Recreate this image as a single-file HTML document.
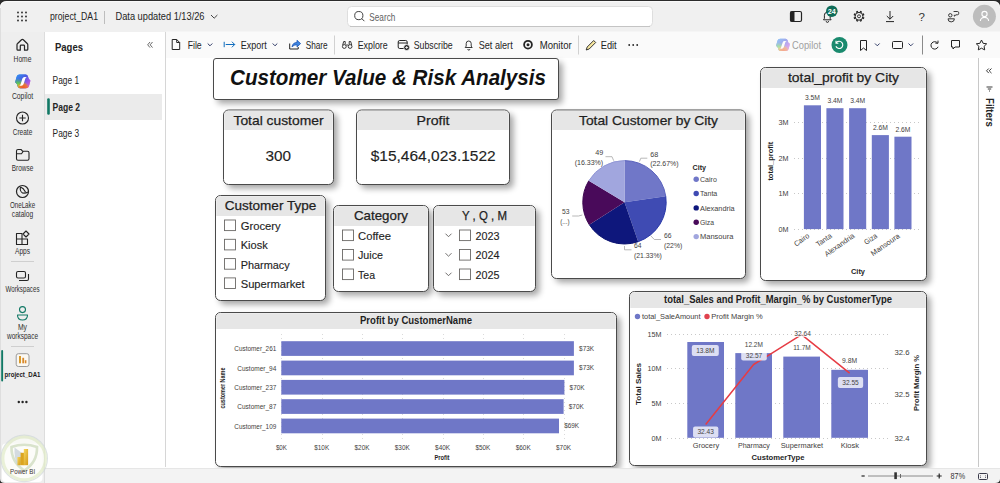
<!DOCTYPE html>
<html lang="en"><head><meta charset="utf-8"><title>project_DA1 - Power BI</title>
<style>
html,body{margin:0;padding:0;background:#ffffff;overflow:hidden}
svg{display:block}
text{font-family:"Liberation Sans",sans-serif;}
</style></head><body>
<svg width="1000" height="483" viewBox="0 0 1000 483">
<rect x="0" y="0" width="1000" height="483" fill="#ffffff" />
<rect x="0" y="0" width="1000" height="32" fill="#f0f0f0" />
<rect x="0" y="32" width="45" height="451" fill="#eeeeee" />
<rect x="45" y="32" width="121" height="435" fill="#ffffff" />
<line x1="165.5" y1="32" x2="165.5" y2="467" stroke="#d6d6d6" stroke-width="1" />
<rect x="166" y="31.5" width="834" height="26.5" fill="#fafafa" />
<line x1="978.5" y1="58" x2="978.5" y2="467" stroke="#c8c8c8" stroke-width="1" />
<path d="M0 7.5 V0 H1000 V7.5 Q1000 1 993.5 1 H6.5 Q0 1 0 7.5 Z" fill="#2b2b2b" stroke="none" stroke-width="1" />
<path d="M0.5 8 Q0.5 1.6 7 1.6 H993 Q999.5 1.6 999.5 8" fill="none" stroke="#fbfbfb" stroke-width="0.8" />
<line x1="0.5" y1="8" x2="0.5" y2="483" stroke="#dedede" stroke-width="1" />
<line x1="44.5" y1="32" x2="44.5" y2="483" stroke="#dddddd" stroke-width="1" />
<circle cx="18" cy="12.5" r="0.9" fill="#242424" />
<circle cx="18" cy="16.5" r="0.9" fill="#242424" />
<circle cx="18" cy="20.5" r="0.9" fill="#242424" />
<circle cx="22" cy="12.5" r="0.9" fill="#242424" />
<circle cx="22" cy="16.5" r="0.9" fill="#242424" />
<circle cx="22" cy="20.5" r="0.9" fill="#242424" />
<circle cx="26" cy="12.5" r="0.9" fill="#242424" />
<circle cx="26" cy="16.5" r="0.9" fill="#242424" />
<circle cx="26" cy="20.5" r="0.9" fill="#242424" />
<text x="50" y="20.4" font-size="11.5" fill="#242424" textLength="48" lengthAdjust="spacingAndGlyphs" >project_DA1</text>
<line x1="104.5" y1="11" x2="104.5" y2="24" stroke="#bdbdbd" stroke-width="1" />
<text x="115.5" y="20.4" font-size="11.5" fill="#242424" textLength="89" lengthAdjust="spacingAndGlyphs" >Data updated 1/13/26</text>
<path d="M211 15 l3.2 3.2 l3.2 -3.2" fill="none" stroke="#424242" stroke-width="1" />
<rect x="347.5" y="6.5" width="305" height="20" fill="#ffffff" rx="4" stroke="#dedede" stroke-width="1" />
<line x1="350" y1="26.5" x2="650" y2="26.5" stroke="#c4c4c4" stroke-width="1" />
<circle cx="358.8" cy="15.6" r="4.1" fill="none" stroke="#424242" stroke-width="1" />
<line x1="361.8" y1="18.6" x2="364.4" y2="21.2" stroke="#424242" stroke-width="1" />
<text x="369.3" y="20.6" font-size="11" fill="#616161" textLength="26" lengthAdjust="spacingAndGlyphs" >Search</text>
<rect x="790.5" y="11.5" width="11" height="10" fill="none" rx="1.5" stroke="#242424" stroke-width="1.2" />
<rect x="790.5" y="11.5" width="4" height="10" fill="#242424" />
<path d="M823.5 19.8 h7.6 l-0.9 -1.4 v-3.2 a2.9 2.9 0 0 0 -5.8 0 v3.2 z M826.2 21.2 a1.2 1.2 0 0 0 2.4 0" fill="none" stroke="#242424" stroke-width="1" />
<circle cx="831.8" cy="11.2" r="5.8" fill="#0f6c57" />
<text x="831.8" y="13.8" font-size="7" fill="#ffffff" text-anchor="middle" font-weight="bold" textLength="8" lengthAdjust="spacingAndGlyphs" >24</text>
<circle cx="859" cy="16.3" r="3.9" fill="none" stroke="#242424" stroke-width="1" />
<circle cx="859" cy="16.3" r="1.5" fill="none" stroke="#242424" stroke-width="0.9" />
<line x1="862.7879060832963" y1="17.86900207269687" x2="864.081337428812" y2="18.404758878007996" stroke="#242424" stroke-width="2" />
<line x1="860.5690020726969" y1="20.087906083296275" x2="861.1047588780079" y2="21.381337428812078" stroke="#242424" stroke-width="2" />
<line x1="857.4309979273031" y1="20.087906083296275" x2="856.8952411219921" y2="21.381337428812078" stroke="#242424" stroke-width="2" />
<line x1="855.2120939167037" y1="17.86900207269687" x2="853.918662571188" y2="18.404758878007996" stroke="#242424" stroke-width="2" />
<line x1="855.2120939167037" y1="14.730997927303132" x2="853.918662571188" y2="14.195241121992007" stroke="#242424" stroke-width="2" />
<line x1="857.4309979273031" y1="12.512093916703726" x2="856.8952411219921" y2="11.218662571187924" stroke="#242424" stroke-width="2" />
<line x1="860.5690020726969" y1="12.512093916703726" x2="861.1047588780079" y2="11.218662571187924" stroke="#242424" stroke-width="2" />
<line x1="862.7879060832963" y1="14.73099792730313" x2="864.081337428812" y2="14.195241121992003" stroke="#242424" stroke-width="2" />
<path d="M890 11 v8.2 M886.8 16 l3.2 3.2 l3.2 -3.2 M886 21.6 h8" fill="none" stroke="#242424" stroke-width="1" />
<text x="921.6" y="20.7" font-size="11.5" fill="#333333" text-anchor="middle" >?</text>
<circle cx="950.3" cy="15.3" r="1.7" fill="none" stroke="#242424" stroke-width="0.9" />
<path d="M953.6 11.5 h3.8 q1.3 0 1.3 1.2 v0.9 q0 1.2 -1.3 1.2 h-1.4 l-1.7 1.4 v-1.4 M948 18.8 h6.4 q0 3.1 -3.2 3.1 q-3.2 0 -3.2 -3.1 z" fill="none" stroke="#242424" stroke-width="0.9" />
<circle cx="984.4" cy="16.3" r="11.5" fill="#bdbdbd" />
<circle cx="984.5" cy="14" r="2.6" fill="none" stroke="#ffffff" stroke-width="1.1" />
<path d="M980.4 21 a4.1 3.6 0 0 1 8.2 0" fill="none" stroke="#ffffff" stroke-width="1.1" />
<path d="M17 44.8 q0 -0.8 0.6 -1.3 l3.9 -3.7 q0.9 -0.8 1.8 0 l3.9 3.7 q0.6 0.5 0.6 1.3 v4.4 q0 1 -1 1 h-2.3 v-4.2 q0 -0.8 -0.8 -0.8 h-2.6 q-0.8 0 -0.8 0.8 v4.2 h-2.3 q-1 0 -1 -1 z" fill="none" stroke="#242424" stroke-width="1.2" stroke-linejoin="round"/>
<text x="22.5" y="61.6" font-size="8.2" fill="#2e2e2e" text-anchor="middle" textLength="17.8" lengthAdjust="spacingAndGlyphs" >Home</text>
<defs><linearGradient id="cgA" x1="0" y1="0" x2="1" y2="0.9"><stop offset="0" stop-color="#2b9af3"/><stop offset="0.45" stop-color="#4a5be0"/><stop offset="0.75" stop-color="#a455e6"/><stop offset="1" stop-color="#ee62b8"/></linearGradient><radialGradient id="cgB" cx="0.18" cy="0.9" r="0.62"><stop offset="0" stop-color="#d9dc2a"/><stop offset="0.45" stop-color="#59c65a"/><stop offset="1" stop-color="#59c65a" stop-opacity="0"/></radialGradient><radialGradient id="cgC" cx="0.52" cy="0.95" r="0.42"><stop offset="0" stop-color="#f5552a"/><stop offset="0.6" stop-color="#f5752a" stop-opacity="0.85"/><stop offset="1" stop-color="#f58a3a" stop-opacity="0"/></radialGradient><g id="cop"><path id="copS" d="M4.6 0.1 h6 q1.8 0 2.3 1.7 l0.6 2 q0.4 1.3 1.2 1.5 q0.9 0.3 0.5 1.8 l-1.2 4.5 q-0.6 2.3 -3 2.3 h-6 q-1.8 0 -2.3 -1.7 l-0.6 -2 q-0.4 -1.3 -1.2 -1.5 q-0.9 -0.3 -0.5 -1.8 l1.2 -4.5 q0.6 -2.3 3 -2.3 z" fill="url(#cgA)"/><use href="#copS" fill="url(#cgB)"/><path d="M4.6 0.1 h6 q1.8 0 2.3 1.7 l0.6 2 q0.4 1.3 1.2 1.5 q0.9 0.3 0.5 1.8 l-1.2 4.5 q-0.6 2.3 -3 2.3 h-6 q-1.8 0 -2.3 -1.7 l-0.6 -2 q-0.4 -1.3 -1.2 -1.5 q-0.9 -0.3 -0.5 -1.8 l1.2 -4.5 q0.6 -2.3 3 -2.3 z" fill="url(#cgB)"/><path d="M4.6 0.1 h6 q1.8 0 2.3 1.7 l0.6 2 q0.4 1.3 1.2 1.5 q0.9 0.3 0.5 1.8 l-1.2 4.5 q-0.6 2.3 -3 2.3 h-6 q-1.8 0 -2.3 -1.7 l-0.6 -2 q-0.4 -1.3 -1.2 -1.5 q-0.9 -0.3 -0.5 -1.8 l1.2 -4.5 q0.6 -2.3 3 -2.3 z" fill="url(#cgC)"/><path d="M7.4 4.2 q0.5 -1.6 2.2 -1.6 h2.4 q-1.2 0.2 -1.7 1.8 l-1.7 5.3 q-0.5 1.6 -2.2 1.6 h-2.4 q1.2 -0.2 1.7 -1.8 z" fill="#ffffff"/></g></defs>
<use href="#cop" transform="translate(15,74.4)"/>
<text x="22.5" y="98.6" font-size="8.2" fill="#2e2e2e" text-anchor="middle" textLength="21.2" lengthAdjust="spacingAndGlyphs" >Copilot</text>
<circle cx="22.5" cy="118" r="6" fill="none" stroke="#242424" stroke-width="1.1" />
<path d="M22.5 114.8 v6.4 M19.3 118 h6.4" fill="none" stroke="#242424" stroke-width="1.1" />
<text x="22.5" y="135" font-size="8.2" fill="#2e2e2e" text-anchor="middle" textLength="19.5" lengthAdjust="spacingAndGlyphs" >Create</text>
<path d="M16.5 151 q0 -1.5 1.5 -1.5 h3 l1.8 1.8 h4.7 q1.5 0 1.5 1.5 v6 q0 1.5 -1.5 1.5 h-9.5 q-1.5 0 -1.5 -1.5 z M16.5 153.8 h5 l1.8 -2.5" fill="none" stroke="#242424" stroke-width="1.1" stroke-linejoin="round"/>
<text x="22.5" y="171" font-size="8.2" fill="#2e2e2e" text-anchor="middle" textLength="21.5" lengthAdjust="spacingAndGlyphs" >Browse</text>
<circle cx="22.5" cy="191.5" r="6" fill="none" stroke="#242424" stroke-width="1.2" />
<path d="M20.5 187 q-1 4 2 6 q3 0.5 5.5 -1 M20.5 187 q3 1 5 5" fill="none" stroke="#242424" stroke-width="1.1" />
<text x="22.5" y="208" font-size="8.2" fill="#2e2e2e" text-anchor="middle" textLength="25.2" lengthAdjust="spacingAndGlyphs" >OneLake</text>
<text x="22.5" y="217" font-size="8.2" fill="#2e2e2e" text-anchor="middle" textLength="21.3" lengthAdjust="spacingAndGlyphs" >catalog</text>
<path d="M16.5 233.5 h5.5 v5.5 h-5.5 z M16.5 239 h5.5 v5.5 h-5.5 z M22 239 h5.5 v5.5 h-5.5 z" fill="none" stroke="#242424" stroke-width="1.1" stroke-linejoin="round"/>
<path d="M26 231 l3 3 l-3 3 l-3 -3 z" fill="none" stroke="#242424" stroke-width="1.1" stroke-linejoin="round"/>
<text x="22.5" y="254" font-size="8.2" fill="#2e2e2e" text-anchor="middle" textLength="15" lengthAdjust="spacingAndGlyphs" >Apps</text>
<line x1="11" y1="261.5" x2="34" y2="261.5" stroke="#cfcfcf" stroke-width="1" />
<rect x="16.5" y="271.5" width="9" height="6.5" fill="none" rx="1.5" stroke="#242424" stroke-width="1.1" />
<path d="M19 280.5 h8 q1.5 0 1.5 -1.5 v-5" fill="none" stroke="#242424" stroke-width="1.1" />
<text x="22.5" y="292" font-size="8.2" fill="#2e2e2e" text-anchor="middle" textLength="34" lengthAdjust="spacingAndGlyphs" >Workspaces</text>
<circle cx="22.5" cy="309.6" r="3" fill="none" stroke="#117865" stroke-width="1.1" />
<path d="M17.5 315 h10 q0 5 -5 5 q-5 0 -5 -5 z" fill="none" stroke="#117865" stroke-width="1.1" stroke-linejoin="round"/>
<text x="22.5" y="329.5" font-size="8.2" fill="#2e2e2e" text-anchor="middle" textLength="9" lengthAdjust="spacingAndGlyphs" >My</text>
<text x="22.5" y="338.5" font-size="8.2" fill="#2e2e2e" text-anchor="middle" textLength="31" lengthAdjust="spacingAndGlyphs" >workspace</text>
<line x1="11" y1="346.5" x2="34" y2="346.5" stroke="#cfcfcf" stroke-width="1" />
<rect x="1.2" y="350" width="1.9" height="31.5" fill="#117865" rx="0.9" />
<rect x="16.2" y="353.7" width="12.8" height="12.8" fill="#fbf8f2" rx="2.2" stroke="#9a9a9a" stroke-width="1" />
<rect x="19" y="356" width="2" height="7.3" fill="#d99a2b" />
<rect x="22.3" y="357.8" width="1.8" height="5.5" fill="#d9892b" />
<rect x="24.8" y="360.2" width="1.6" height="3.1" fill="#d9892b" />
<text x="22.5" y="376.8" font-size="8" fill="#1a1a1a" text-anchor="middle" font-weight="bold" textLength="35.8" lengthAdjust="spacingAndGlyphs" >project_DA1</text>
<circle cx="18.8" cy="402" r="1.2" fill="#242424" />
<circle cx="22.6" cy="402" r="1.2" fill="#242424" />
<circle cx="26.4" cy="402" r="1.2" fill="#242424" />
<text x="55" y="51" font-size="11.5" fill="#242424" font-weight="bold" textLength="28" lengthAdjust="spacingAndGlyphs" >Pages</text>
<path d="M150 42 l-2.3 2.8 l2.3 2.8 M152.5 42 l-2.3 2.8 l2.3 2.8" fill="none" stroke="#424242" stroke-width="0.8" />
<text x="52.6" y="84" font-size="10.5" fill="#242424" textLength="26.5" lengthAdjust="spacingAndGlyphs" >Page 1</text>
<rect x="45" y="94" width="117" height="26" fill="#ebebeb" />
<rect x="47.2" y="98.2" width="2.6" height="16.6" fill="#117865" rx="1.2" />
<text x="52.6" y="110.6" font-size="10.5" fill="#242424" font-weight="bold" textLength="27.5" lengthAdjust="spacingAndGlyphs" >Page 2</text>
<text x="52.6" y="137" font-size="10.5" fill="#242424" textLength="26.5" lengthAdjust="spacingAndGlyphs" >Page 3</text>
<g transform="translate(0.7,0)">
<path d="M171.5 39.5 h4.5 l3 3 v7 h-7.5 z M176 39.5 v3 h3" fill="none" stroke="#242424" stroke-width="1" stroke-linejoin="round"/>
<text x="187" y="48.5" font-size="10.5" fill="#242424" textLength="14" lengthAdjust="spacingAndGlyphs" >File</text>
<path d="M207 43.5 l2.3 2.3 l2.3 -2.3" fill="none" stroke="#2f3a66" stroke-width="1" />
<path d="M223.5 41.8 v5.4 M225 44.5 h9 M231.2 41.7 l2.8 2.8 l-2.8 2.8" fill="none" stroke="#0f6cbd" stroke-width="1" />
<text x="240" y="48.5" font-size="10.5" fill="#242424" textLength="26" lengthAdjust="spacingAndGlyphs" >Export</text>
<path d="M272 43.5 l2.3 2.3 l2.3 -2.3" fill="none" stroke="#2f3a66" stroke-width="1" />
<path d="M289 43.5 v5.5 h8.5 v-2" fill="none" stroke="#242424" stroke-width="1" />
<path d="M291.3 46.8 q0.8 -4.3 5 -4.3 v-2.2 l3.6 3.3 l-3.6 3.3 v-2.2 q-3 0 -5 2.1 z" fill="#3f86e0" stroke="#1d55b5" stroke-width="0.8" stroke-linejoin="round"/>
<text x="305" y="48.5" font-size="10.5" fill="#242424" textLength="22" lengthAdjust="spacingAndGlyphs" >Share</text>
<line x1="333.8" y1="35.5" x2="333.8" y2="54.5" stroke="#d1d1d1" stroke-width="1" />
<circle cx="343.6" cy="46.5" r="1.9" fill="none" stroke="#242424" stroke-width="0.9" />
<circle cx="349.4" cy="46.5" r="1.9" fill="none" stroke="#242424" stroke-width="0.9" />
<path d="M342 45 l1 -3.5 h1.5 v3 M351 45 l-1 -3.5 h-1.5 v3 M345.4 45 h2.2" fill="none" stroke="#242424" stroke-width="0.9" />
<text x="357" y="48.5" font-size="10.5" fill="#242424" textLength="30" lengthAdjust="spacingAndGlyphs" >Explore</text>
<rect x="397.5" y="40.5" width="9" height="8" fill="none" rx="1.5" stroke="#242424" stroke-width="1" />
<line x1="397.5" y1="43" x2="406.5" y2="43" stroke="#242424" stroke-width="1" />
<circle cx="406" cy="47.5" r="3" fill="#242424" stroke="#fafafa" stroke-width="0.8" />
<path d="M406 46 v3 M404.5 47.5 h3" fill="none" stroke="#ffffff" stroke-width="0.8" />
<text x="413" y="48.5" font-size="10.5" fill="#242424" textLength="39" lengthAdjust="spacingAndGlyphs" >Subscribe</text>
<path d="M464.5 47.5 h7 l-1 -1.4 v-2.6 a2.5 2.5 0 0 0 -5 0 v2.6 z M467 49 a1.1 1.1 0 0 0 2.2 0" fill="none" stroke="#242424" stroke-width="0.9" />
<text x="478" y="48.5" font-size="10.5" fill="#242424" textLength="34" lengthAdjust="spacingAndGlyphs" >Set alert</text>
<circle cx="527.3" cy="44.7" r="3.9" fill="none" stroke="#242424" stroke-width="1.8" />
<circle cx="527.3" cy="44.7" r="1.5" fill="#242424" />
<text x="539" y="48.5" font-size="10.5" fill="#242424" textLength="32" lengthAdjust="spacingAndGlyphs" >Monitor</text>
<line x1="577.8" y1="35.5" x2="577.8" y2="54.5" stroke="#d1d1d1" stroke-width="1" />
<path d="M585.5 50 l1 -3 l6.5 -6.5 l2 2 l-6.5 6.5 z" fill="#f7e7a0" stroke="#242424" stroke-width="0.9" stroke-linejoin="round"/>
<text x="600" y="48.5" font-size="10.5" fill="#242424" textLength="16" lengthAdjust="spacingAndGlyphs" >Edit</text>
<circle cx="628.5" cy="45" r="0.9" fill="#242424" />
<circle cx="632.5" cy="45" r="0.9" fill="#242424" />
<circle cx="636.5" cy="45" r="0.9" fill="#242424" />
</g>
<use href="#cop" transform="translate(776,38.6) scale(0.9)" opacity="0.5"/>
<text x="792" y="48.5" font-size="10.5" fill="#a0a0a0" textLength="29" lengthAdjust="spacingAndGlyphs" >Copilot</text>
<circle cx="839.5" cy="45" r="8" fill="#1a8a6e" />
<path d="M836.5 42.5 a3.6 3.6 0 1 1 -0.6 3.8 M836 40.8 v2.4 h2.4" fill="none" stroke="#ffffff" stroke-width="1.1" />
<path d="M860.5 40.5 h6 v10 l-3 -2.5 l-3 2.5 z" fill="none" stroke="#242424" stroke-width="1" stroke-linejoin="round"/>
<path d="M875 43.5 l2.3 2.3 l2.3 -2.3" fill="none" stroke="#2f3a66" stroke-width="1" />
<rect x="892.5" y="41.5" width="10" height="7" fill="none" rx="1" stroke="#242424" stroke-width="1" />
<path d="M908.5 43.5 l2.3 2.3 l2.3 -2.3" fill="none" stroke="#2f3a66" stroke-width="1" />
<line x1="922.5" y1="35.5" x2="922.5" y2="54.5" stroke="#8a8a8a" stroke-width="1" />
<path d="M937.5 43 a3.7 3.7 0 1 0 0.6 3.8 M938 40.6 v2.6 h-2.6" fill="none" stroke="#242424" stroke-width="1" />
<path d="M951.5 40.5 h8 v6.5 h-4.5 l-2 2 v-2 h-1.5 z" fill="none" stroke="#242424" stroke-width="1" stroke-linejoin="round"/>
<path d="M981.5 40 l1.6 3.3 l3.6 0.5 l-2.6 2.5 l0.6 3.6 l-3.2 -1.7 l-3.2 1.7 l0.6 -3.6 l-2.6 -2.5 l3.6 -0.5 z" fill="none" stroke="#242424" stroke-width="1" stroke-linejoin="round"/>
<path d="M991.5 68.5 l-2.3 2.3 l2.3 2.3 M988.8 68.5 l-2.3 2.3 l2.3 2.3" fill="none" stroke="#242424" stroke-width="0.9" />
<path d="M986.5 87 h6 M987.8 89 h3.4 M989 91 h1" fill="none" stroke="#242424" stroke-width="0.9" />
<text x="986" y="98" font-size="10.5" fill="#242424" font-weight="bold" textLength="29" lengthAdjust="spacingAndGlyphs" transform="rotate(90 986 98)" >Filters</text>
<defs><filter id="sh" x="-10%" y="-20%" width="130%" height="160%"><feGaussianBlur in="SourceAlpha" stdDeviation="3"/><feOffset dx="4" dy="4"/><feComponentTransfer><feFuncA type="linear" slope="0.36"/></feComponentTransfer></filter></defs>
<rect x="213.5" y="58.5" width="345" height="41" fill="#000" rx="2.5" filter="url(#sh)"/>
<rect x="213.5" y="58.5" width="345" height="41" fill="#ffffff" rx="2.5" stroke="#4a4a4a" stroke-width="1" />
<text x="230" y="85" font-size="21.5" fill="#111111" font-weight="bold" font-style="italic" textLength="316" lengthAdjust="spacingAndGlyphs" >Customer Value &amp; Risk Analysis</text>
<rect x="223.5" y="110.0" width="110" height="74.5" fill="#000" rx="5" filter="url(#sh)"/>
<rect x="223.5" y="110.0" width="110" height="74.5" fill="#ffffff" rx="5" stroke="#4a4a4a" stroke-width="1" />
<path d="M224.3 130.0 V114.8 Q224.3 110.8 228.3 110.8 H328.7 Q332.7 110.8 332.7 114.8 V130.0 Z" fill="#e6e6e6"/>
<text x="278.5" y="125" font-size="13" fill="#1f1f1f" text-anchor="middle" textLength="90" lengthAdjust="spacingAndGlyphs" stroke="#1f1f1f" stroke-width="0.25">Total customer</text>
<text x="278.3" y="161.2" font-size="15.4" fill="#1f1f1f" text-anchor="middle" textLength="25.5" lengthAdjust="spacingAndGlyphs" stroke="#1f1f1f" stroke-width="0.15">300</text>
<rect x="356.5" y="110.0" width="153" height="74.5" fill="#000" rx="5" filter="url(#sh)"/>
<rect x="356.5" y="110.0" width="153" height="74.5" fill="#ffffff" rx="5" stroke="#4a4a4a" stroke-width="1" />
<path d="M357.3 130.0 V114.8 Q357.3 110.8 361.3 110.8 H504.7 Q508.7 110.8 508.7 114.8 V130.0 Z" fill="#e6e6e6"/>
<text x="433.0" y="125" font-size="13" fill="#1f1f1f" text-anchor="middle" textLength="33" lengthAdjust="spacingAndGlyphs" stroke="#1f1f1f" stroke-width="0.25">Profit</text>
<text x="433.2" y="161.2" font-size="15.4" fill="#1f1f1f" text-anchor="middle" textLength="125" lengthAdjust="spacingAndGlyphs" stroke="#1f1f1f" stroke-width="0.15">$15,464,023.1522</text>
<rect x="215.5" y="195.5" width="110" height="105" fill="#000" rx="5" filter="url(#sh)"/>
<rect x="215.5" y="195.5" width="110" height="105" fill="#ffffff" rx="5" stroke="#4a4a4a" stroke-width="1" />
<path d="M216.3 216 V200.3 Q216.3 196.3 220.3 196.3 H320.7 Q324.7 196.3 324.7 200.3 V216 Z" fill="#e6e6e6"/>
<text x="270.5" y="210" font-size="13" fill="#1f1f1f" text-anchor="middle" textLength="91.5" lengthAdjust="spacingAndGlyphs" stroke="#1f1f1f" stroke-width="0.25">Customer Type</text>
<rect x="224.5" y="220.0" width="11" height="10.6" fill="#ffffff" stroke="#6a6866" stroke-width="0.9" />
<text x="240.7" y="230.0" font-size="11.5" fill="#1f1f1f" textLength="40" lengthAdjust="spacingAndGlyphs" stroke="#1f1f1f" stroke-width="0.15">Grocery</text>
<rect x="224.5" y="239.3" width="11" height="10.6" fill="#ffffff" stroke="#6a6866" stroke-width="0.9" />
<text x="240.7" y="249.3" font-size="11.5" fill="#1f1f1f" textLength="27" lengthAdjust="spacingAndGlyphs" stroke="#1f1f1f" stroke-width="0.15">Kiosk</text>
<rect x="224.5" y="258.6" width="11" height="10.6" fill="#ffffff" stroke="#6a6866" stroke-width="0.9" />
<text x="240.7" y="268.6" font-size="11.5" fill="#1f1f1f" textLength="49" lengthAdjust="spacingAndGlyphs" stroke="#1f1f1f" stroke-width="0.15">Pharmacy</text>
<rect x="224.5" y="277.9" width="11" height="10.6" fill="#ffffff" stroke="#6a6866" stroke-width="0.9" />
<text x="240.7" y="287.9" font-size="11.5" fill="#1f1f1f" textLength="64" lengthAdjust="spacingAndGlyphs" stroke="#1f1f1f" stroke-width="0.15">Supermarket</text>
<rect x="333.5" y="205.5" width="95" height="86" fill="#000" rx="5" filter="url(#sh)"/>
<rect x="333.5" y="205.5" width="95" height="86" fill="#ffffff" rx="5" stroke="#4a4a4a" stroke-width="1" />
<path d="M334.3 226 V210.3 Q334.3 206.3 338.3 206.3 H423.7 Q427.7 206.3 427.7 210.3 V226 Z" fill="#e6e6e6"/>
<text x="381.0" y="220" font-size="13" fill="#1f1f1f" text-anchor="middle" textLength="54" lengthAdjust="spacingAndGlyphs" stroke="#1f1f1f" stroke-width="0.25">Category</text>
<rect x="342.5" y="230.0" width="11" height="10.6" fill="#ffffff" stroke="#6a6866" stroke-width="0.9" />
<text x="358" y="239.5" font-size="11.5" fill="#1f1f1f" textLength="33" lengthAdjust="spacingAndGlyphs" stroke="#1f1f1f" stroke-width="0.15">Coffee</text>
<rect x="342.5" y="249.5" width="11" height="10.6" fill="#ffffff" stroke="#6a6866" stroke-width="0.9" />
<text x="358" y="259.0" font-size="11.5" fill="#1f1f1f" textLength="25" lengthAdjust="spacingAndGlyphs" stroke="#1f1f1f" stroke-width="0.15">Juice</text>
<rect x="342.5" y="269.0" width="11" height="10.6" fill="#ffffff" stroke="#6a6866" stroke-width="0.9" />
<text x="358" y="278.5" font-size="11.5" fill="#1f1f1f" textLength="17" lengthAdjust="spacingAndGlyphs" stroke="#1f1f1f" stroke-width="0.15">Tea</text>
<rect x="433.5" y="205.5" width="102" height="86" fill="#000" rx="5" filter="url(#sh)"/>
<rect x="433.5" y="205.5" width="102" height="86" fill="#ffffff" rx="5" stroke="#4a4a4a" stroke-width="1" />
<path d="M434.3 226 V210.3 Q434.3 206.3 438.3 206.3 H530.7 Q534.7 206.3 534.7 210.3 V226 Z" fill="#e6e6e6"/>
<text x="484.5" y="220" font-size="13" fill="#1f1f1f" text-anchor="middle" textLength="45" lengthAdjust="spacingAndGlyphs" stroke="#1f1f1f" stroke-width="0.25">Y , Q , M</text>
<path d="M445.5 233.7 l3 3 l3 -3" fill="none" stroke="#605e5c" stroke-width="0.9" />
<rect x="459.5" y="230.0" width="11" height="10.6" fill="#ffffff" stroke="#6a6866" stroke-width="0.9" />
<text x="475.5" y="239.5" font-size="11.5" fill="#1f1f1f" textLength="24" lengthAdjust="spacingAndGlyphs" stroke="#1f1f1f" stroke-width="0.15">2023</text>
<path d="M445.5 253.2 l3 3 l3 -3" fill="none" stroke="#605e5c" stroke-width="0.9" />
<rect x="459.5" y="249.5" width="11" height="10.6" fill="#ffffff" stroke="#6a6866" stroke-width="0.9" />
<text x="475.5" y="259.0" font-size="11.5" fill="#1f1f1f" textLength="24" lengthAdjust="spacingAndGlyphs" stroke="#1f1f1f" stroke-width="0.15">2024</text>
<path d="M445.5 272.7 l3 3 l3 -3" fill="none" stroke="#605e5c" stroke-width="0.9" />
<rect x="459.5" y="269.0" width="11" height="10.6" fill="#ffffff" stroke="#6a6866" stroke-width="0.9" />
<text x="475.5" y="278.5" font-size="11.5" fill="#1f1f1f" textLength="24" lengthAdjust="spacingAndGlyphs" stroke="#1f1f1f" stroke-width="0.15">2025</text>
<rect x="551.5" y="110.0" width="194" height="168.5" fill="#000" rx="5" filter="url(#sh)"/>
<rect x="551.5" y="110.0" width="194" height="168.5" fill="#ffffff" rx="5" stroke="#4a4a4a" stroke-width="1" />
<path d="M552.3 130.0 V114.8 Q552.3 110.8 556.3 110.8 H740.7 Q744.7 110.8 744.7 114.8 V130.0 Z" fill="#e6e6e6"/>
<text x="648.5" y="124.6" font-size="13.2" fill="#1f1f1f" text-anchor="middle" textLength="139" lengthAdjust="spacingAndGlyphs" stroke="#1f1f1f" stroke-width="0.25">Total Customer by City</text>
<path d="M639.5 161.5 l1.3 -3.3 h6.5" fill="none" stroke="#a6a6a6" stroke-width="0.8" />
<text x="650.2" y="156.7" font-size="8" fill="#434140" textLength="8" lengthAdjust="spacingAndGlyphs" >68</text>
<text x="650.2" y="166.39999999999998" font-size="8" fill="#434140" textLength="28.5" lengthAdjust="spacingAndGlyphs" >(22.67%)</text>
<path d="M613.7 160.7 l-1.7 -4 h-6.5" fill="none" stroke="#a6a6a6" stroke-width="0.8" />
<text x="603.2" y="154.8" font-size="8" fill="#434140" text-anchor="end" textLength="8" lengthAdjust="spacingAndGlyphs" >49</text>
<text x="603.2" y="164.5" font-size="8" fill="#434140" text-anchor="end" textLength="28.5" lengthAdjust="spacingAndGlyphs" >(16.33%)</text>
<path d="M582.3 215 l-3.8 1 h-6.3" fill="none" stroke="#a6a6a6" stroke-width="0.8" />
<text x="569.5" y="214" font-size="8" fill="#434140" text-anchor="end" textLength="7.5" lengthAdjust="spacingAndGlyphs" >53</text>
<text x="569.5" y="223.7" font-size="8" fill="#434140" text-anchor="end" textLength="9.3" lengthAdjust="spacingAndGlyphs" >(...)</text>
<path d="M650.8 235.8 l3.5 3.7 h6.7" fill="none" stroke="#a6a6a6" stroke-width="0.8" />
<text x="664" y="237.8" font-size="8" fill="#434140" textLength="7.5" lengthAdjust="spacingAndGlyphs" >66</text>
<text x="664" y="247.5" font-size="8" fill="#434140" textLength="18.3" lengthAdjust="spacingAndGlyphs" >(22%)</text>
<path d="M624.5 246 v3.8 h7" fill="none" stroke="#a6a6a6" stroke-width="0.8" />
<text x="634" y="248.3" font-size="8" fill="#434140" textLength="7.5" lengthAdjust="spacingAndGlyphs" >64</text>
<text x="634" y="258.0" font-size="8" fill="#434140" textLength="27.8" lengthAdjust="spacingAndGlyphs" >(21.33%)</text>
<path d="M624.5 202.3 L624.50 160.60 A41.7 41.7 0 0 1 665.75 196.21 Z" fill="#7077c8"/>
<path d="M624.50 160.60 A41.7 41.7 0 0 1 665.75 196.21" fill="none" stroke="#5a62bd" stroke-width="1"/>
<path d="M624.5 202.3 L665.75 196.21 A41.7 41.7 0 0 1 638.21 241.68 Z" fill="#3f4bb3"/>
<path d="M665.75 196.21 A41.7 41.7 0 0 1 638.21 241.68" fill="none" stroke="#2838a8" stroke-width="1"/>
<path d="M624.5 202.3 L638.21 241.68 A41.7 41.7 0 0 1 589.29 224.64 Z" fill="#0e177c"/>
<path d="M638.21 241.68 A41.7 41.7 0 0 1 589.29 224.64" fill="none" stroke="#0a1270" stroke-width="1"/>
<path d="M624.5 202.3 L589.29 224.64 A41.7 41.7 0 0 1 588.83 180.70 Z" fill="#490a5a"/>
<path d="M589.29 224.64 A41.7 41.7 0 0 1 588.83 180.70" fill="none" stroke="#3d0650" stroke-width="1"/>
<path d="M624.5 202.3 L588.83 180.70 A41.7 41.7 0 0 1 624.50 160.60 Z" fill="#a1a6de"/>
<path d="M588.83 180.70 A41.7 41.7 0 0 1 624.50 160.60" fill="none" stroke="#9298d6" stroke-width="1"/>
<text x="692.5" y="170" font-size="8" fill="#1f1f1f" font-weight="bold" textLength="13.5" lengthAdjust="spacingAndGlyphs" >City</text>
<circle cx="696.2" cy="179.2" r="2.7" fill="#7077c8" />
<text x="700" y="181.89999999999998" font-size="7.5" fill="#434140" textLength="16.8" lengthAdjust="spacingAndGlyphs" >Cairo</text>
<circle cx="696.2" cy="193.54999999999998" r="2.7" fill="#3f4bb3" />
<text x="700" y="196.24999999999997" font-size="7.5" fill="#434140" textLength="17.3" lengthAdjust="spacingAndGlyphs" >Tanta</text>
<circle cx="696.2" cy="207.89999999999998" r="2.7" fill="#0e177c" />
<text x="700" y="210.59999999999997" font-size="7.5" fill="#434140" textLength="34.7" lengthAdjust="spacingAndGlyphs" >Alexandria</text>
<circle cx="696.2" cy="222.25" r="2.7" fill="#490a5a" />
<text x="700" y="224.95" font-size="7.5" fill="#434140" textLength="14" lengthAdjust="spacingAndGlyphs" >Giza</text>
<circle cx="696.2" cy="236.6" r="2.7" fill="#a1a6de" />
<text x="700" y="239.29999999999998" font-size="7.5" fill="#434140" textLength="33.4" lengthAdjust="spacingAndGlyphs" >Mansoura</text>
<rect x="760.5" y="67.5" width="166" height="213" fill="#000" rx="5" filter="url(#sh)"/>
<rect x="760.5" y="67.5" width="166" height="213" fill="#ffffff" rx="5" stroke="#4a4a4a" stroke-width="1" />
<path d="M761.3 88 V72.3 Q761.3 68.3 765.3 68.3 H921.7 Q925.7 68.3 925.7 72.3 V88 Z" fill="#e6e6e6"/>
<text x="843.5" y="81.5" font-size="13" fill="#1f1f1f" text-anchor="middle" textLength="111" lengthAdjust="spacingAndGlyphs" stroke="#1f1f1f" stroke-width="0.25">total_profit by City</text>
<line x1="794" y1="229.5" x2="921" y2="229.5" stroke="#c8c8c8" stroke-width="1" stroke-dasharray="1 3"/>
<text x="788.4" y="231.9" font-size="7.5" fill="#434140" text-anchor="end" textLength="10" lengthAdjust="spacingAndGlyphs" >0M</text>
<line x1="794" y1="193.5" x2="921" y2="193.5" stroke="#c8c8c8" stroke-width="1" stroke-dasharray="1 3"/>
<text x="788.4" y="196.23000000000002" font-size="7.5" fill="#434140" text-anchor="end" textLength="10" lengthAdjust="spacingAndGlyphs" >1M</text>
<line x1="794" y1="158.5" x2="921" y2="158.5" stroke="#c8c8c8" stroke-width="1" stroke-dasharray="1 3"/>
<text x="788.4" y="160.56" font-size="7.5" fill="#434140" text-anchor="end" textLength="10" lengthAdjust="spacingAndGlyphs" >2M</text>
<line x1="794" y1="122.5" x2="921" y2="122.5" stroke="#c8c8c8" stroke-width="1" stroke-dasharray="1 3"/>
<text x="788.4" y="124.88999999999999" font-size="7.5" fill="#434140" text-anchor="end" textLength="10" lengthAdjust="spacingAndGlyphs" >3M</text>
<rect x="803.9" y="105.3" width="17.1" height="123.8" fill="#6f77c7" />
<text x="812.5" y="100.12509999999997" font-size="7.5" fill="#434140" text-anchor="middle" textLength="15" lengthAdjust="spacingAndGlyphs" >3.5M</text>
<text x="809.9" y="237" font-size="7.5" fill="#434140" text-anchor="end" textLength="16.8" lengthAdjust="spacingAndGlyphs" transform="rotate(-35 809.9 237)" >Cairo</text>
<rect x="826.4" y="108.2" width="17.1" height="120.9" fill="#6f77c7" />
<text x="835.0" y="102.97869999999998" font-size="7.5" fill="#434140" text-anchor="middle" textLength="15" lengthAdjust="spacingAndGlyphs" >3.4M</text>
<text x="832.4" y="237" font-size="7.5" fill="#434140" text-anchor="end" textLength="17.3" lengthAdjust="spacingAndGlyphs" transform="rotate(-35 832.4 237)" >Tanta</text>
<rect x="849.1" y="108.2" width="17.1" height="120.9" fill="#6f77c7" />
<text x="857.7" y="102.97869999999998" font-size="7.5" fill="#434140" text-anchor="middle" textLength="15" lengthAdjust="spacingAndGlyphs" >3.4M</text>
<text x="855.1" y="237" font-size="7.5" fill="#434140" text-anchor="end" textLength="34.7" lengthAdjust="spacingAndGlyphs" transform="rotate(-35 855.1 237)" >Alexandria</text>
<rect x="871.8" y="135.1" width="17.1" height="94.0" fill="#6f77c7" />
<text x="880.4" y="129.90955000000002" font-size="7.5" fill="#434140" text-anchor="middle" textLength="15" lengthAdjust="spacingAndGlyphs" >2.6M</text>
<text x="877.8" y="237" font-size="7.5" fill="#434140" text-anchor="end" textLength="14" lengthAdjust="spacingAndGlyphs" transform="rotate(-35 877.8 237)" >Giza</text>
<rect x="894.4" y="136.7" width="17.1" height="92.4" fill="#6f77c7" />
<text x="903.0" y="131.5147" font-size="7.5" fill="#434140" text-anchor="middle" textLength="15" lengthAdjust="spacingAndGlyphs" >2.6M</text>
<text x="900.4" y="237" font-size="7.5" fill="#434140" text-anchor="end" textLength="33.4" lengthAdjust="spacingAndGlyphs" transform="rotate(-35 900.4 237)" >Mansoura</text>
<text x="773" y="161.2" font-size="7.5" fill="#1f1f1f" text-anchor="middle" font-weight="bold" textLength="38.8" lengthAdjust="spacingAndGlyphs" transform="rotate(-90 773 161.2)" >total_profit</text>
<text x="858" y="273.6" font-size="8" fill="#1f1f1f" text-anchor="middle" font-weight="bold" textLength="14" lengthAdjust="spacingAndGlyphs" >City</text>
<rect x="215.5" y="312.5" width="401" height="154" fill="#000" rx="5" filter="url(#sh)"/>
<rect x="215.5" y="312.5" width="401" height="154" fill="#ffffff" rx="5" stroke="#4a4a4a" stroke-width="1" />
<path d="M216.3 329 V317.3 Q216.3 313.3 220.3 313.3 H611.7 Q615.7 313.3 615.7 317.3 V329 Z" fill="#e6e6e6"/>
<text x="416.0" y="324" font-size="11" fill="#1f1f1f" text-anchor="middle" font-weight="bold" textLength="112" lengthAdjust="spacingAndGlyphs" stroke="#1f1f1f" stroke-width="0">Profit by CustomerName</text>
<line x1="281.5" y1="334" x2="281.5" y2="440" stroke="#dadada" stroke-width="1" stroke-dasharray="1 3"/>
<text x="281.4" y="450" font-size="7.5" fill="#434140" text-anchor="middle" textLength="11" lengthAdjust="spacingAndGlyphs" >$0K</text>
<line x1="322.5" y1="334" x2="322.5" y2="440" stroke="#dadada" stroke-width="1" stroke-dasharray="1 3"/>
<text x="321.7" y="450" font-size="7.5" fill="#434140" text-anchor="middle" textLength="15" lengthAdjust="spacingAndGlyphs" >$10K</text>
<line x1="362.5" y1="334" x2="362.5" y2="440" stroke="#dadada" stroke-width="1" stroke-dasharray="1 3"/>
<text x="362.0" y="450" font-size="7.5" fill="#434140" text-anchor="middle" textLength="15" lengthAdjust="spacingAndGlyphs" >$20K</text>
<line x1="402.5" y1="334" x2="402.5" y2="440" stroke="#dadada" stroke-width="1" stroke-dasharray="1 3"/>
<text x="402.29999999999995" y="450" font-size="7.5" fill="#434140" text-anchor="middle" textLength="15" lengthAdjust="spacingAndGlyphs" >$30K</text>
<line x1="443.5" y1="334" x2="443.5" y2="440" stroke="#dadada" stroke-width="1" stroke-dasharray="1 3"/>
<text x="442.59999999999997" y="450" font-size="7.5" fill="#434140" text-anchor="middle" textLength="15" lengthAdjust="spacingAndGlyphs" >$40K</text>
<line x1="483.5" y1="334" x2="483.5" y2="440" stroke="#dadada" stroke-width="1" stroke-dasharray="1 3"/>
<text x="482.9" y="450" font-size="7.5" fill="#434140" text-anchor="middle" textLength="15" lengthAdjust="spacingAndGlyphs" >$50K</text>
<line x1="523.5" y1="334" x2="523.5" y2="440" stroke="#dadada" stroke-width="1" stroke-dasharray="1 3"/>
<text x="523.1999999999999" y="450" font-size="7.5" fill="#434140" text-anchor="middle" textLength="15" lengthAdjust="spacingAndGlyphs" >$60K</text>
<line x1="564.5" y1="334" x2="564.5" y2="440" stroke="#dadada" stroke-width="1" stroke-dasharray="1 3"/>
<text x="563.5" y="450" font-size="7.5" fill="#434140" text-anchor="middle" textLength="15" lengthAdjust="spacingAndGlyphs" >$70K</text>
<rect x="281.3" y="341.2" width="292.6" height="14.7" fill="#6f77c7" />
<text x="276.3" y="351.3" font-size="7.6" fill="#434140" text-anchor="end" textLength="42" lengthAdjust="spacingAndGlyphs" >Customer_261</text>
<text x="579.078" y="351.0" font-size="7.5" fill="#434140" textLength="15" lengthAdjust="spacingAndGlyphs" >$73K</text>
<rect x="281.3" y="360.6" width="292.6" height="14.7" fill="#6f77c7" />
<text x="276.3" y="370.65000000000003" font-size="7.6" fill="#434140" text-anchor="end" textLength="39" lengthAdjust="spacingAndGlyphs" >Customer_94</text>
<text x="579.078" y="370.35" font-size="7.5" fill="#434140" textLength="15" lengthAdjust="spacingAndGlyphs" >$73K</text>
<rect x="281.3" y="379.9" width="283.1" height="14.7" fill="#6f77c7" />
<text x="276.3" y="390.0" font-size="7.6" fill="#434140" text-anchor="end" textLength="42" lengthAdjust="spacingAndGlyphs" >Customer_237</text>
<text x="569.6075" y="389.7" font-size="7.5" fill="#434140" textLength="15" lengthAdjust="spacingAndGlyphs" >$70K</text>
<rect x="281.3" y="399.2" width="282.3" height="14.7" fill="#6f77c7" />
<text x="276.3" y="409.35" font-size="7.6" fill="#434140" text-anchor="end" textLength="39" lengthAdjust="spacingAndGlyphs" >Customer_87</text>
<text x="568.8015" y="409.05" font-size="7.5" fill="#434140" textLength="15" lengthAdjust="spacingAndGlyphs" >$70K</text>
<rect x="281.3" y="418.6" width="277.7" height="14.7" fill="#6f77c7" />
<text x="276.3" y="428.70000000000005" font-size="7.6" fill="#434140" text-anchor="end" textLength="42" lengthAdjust="spacingAndGlyphs" >Customer_109</text>
<text x="564.167" y="428.40000000000003" font-size="7.5" fill="#434140" textLength="15" lengthAdjust="spacingAndGlyphs" >$69K</text>
<text x="225.3" y="388" font-size="7" fill="#1f1f1f" text-anchor="middle" font-weight="bold" textLength="41" lengthAdjust="spacingAndGlyphs" transform="rotate(-90 225.3 388)" >customer Name</text>
<text x="442" y="459.5" font-size="7" fill="#1f1f1f" text-anchor="middle" font-weight="bold" textLength="15" lengthAdjust="spacingAndGlyphs" >Profit</text>
<rect x="629.5" y="291.5" width="297" height="174" fill="#000" rx="5" filter="url(#sh)"/>
<rect x="629.5" y="291.5" width="297" height="174" fill="#ffffff" rx="5" stroke="#4a4a4a" stroke-width="1" />
<path d="M630.3 308 V296.3 Q630.3 292.3 634.3 292.3 H921.7 Q925.7 292.3 925.7 296.3 V308 Z" fill="#e6e6e6"/>
<text x="778.0" y="302.9" font-size="11" fill="#1f1f1f" text-anchor="middle" font-weight="bold" textLength="228" lengthAdjust="spacingAndGlyphs" stroke="#1f1f1f" stroke-width="0">total_Sales and Profit_Margin_% by CustomerType</text>
<circle cx="637.5" cy="316.5" r="2.7" fill="#6f77c7" />
<text x="642" y="319.3" font-size="7.5" fill="#434140" textLength="58.5" lengthAdjust="spacingAndGlyphs" >total_SaleAmount</text>
<circle cx="707" cy="316.5" r="2.7" fill="#e0424f" />
<text x="711.3" y="319.3" font-size="7.5" fill="#434140" textLength="51.5" lengthAdjust="spacingAndGlyphs" >Profit Margin %</text>
<line x1="667" y1="438.5" x2="888" y2="438.5" stroke="#c8c8c8" stroke-width="1" stroke-dasharray="1 3"/>
<text x="661.5" y="440.6" font-size="7.5" fill="#434140" text-anchor="end" textLength="10" lengthAdjust="spacingAndGlyphs" >0M</text>
<line x1="667" y1="403.5" x2="888" y2="403.5" stroke="#c8c8c8" stroke-width="1" stroke-dasharray="1 3"/>
<text x="661.5" y="405.90000000000003" font-size="7.5" fill="#434140" text-anchor="end" textLength="10" lengthAdjust="spacingAndGlyphs" >5M</text>
<line x1="667" y1="368.5" x2="888" y2="368.5" stroke="#c8c8c8" stroke-width="1" stroke-dasharray="1 3"/>
<text x="661.5" y="371.2" font-size="7.5" fill="#434140" text-anchor="end" textLength="14" lengthAdjust="spacingAndGlyphs" >10M</text>
<line x1="667" y1="334.5" x2="888" y2="334.5" stroke="#c8c8c8" stroke-width="1" stroke-dasharray="1 3"/>
<text x="661.5" y="336.5" font-size="7.5" fill="#434140" text-anchor="end" textLength="14" lengthAdjust="spacingAndGlyphs" >15M</text>
<text x="894.5" y="440.6" font-size="7.5" fill="#434140" textLength="15" lengthAdjust="spacingAndGlyphs" >32.4</text>
<text x="894.5" y="397.40000000000003" font-size="7.5" fill="#434140" textLength="15" lengthAdjust="spacingAndGlyphs" >32.5</text>
<text x="894.5" y="354.6" font-size="7.5" fill="#434140" textLength="15" lengthAdjust="spacingAndGlyphs" >32.6</text>
<rect x="687.3" y="342.0" width="36.7" height="95.8" fill="#6f77c7" />
<text x="705.9" y="447.8" font-size="7.8" fill="#434140" text-anchor="middle" textLength="26.5" lengthAdjust="spacingAndGlyphs" >Grocery</text>
<rect x="735.3" y="353.1" width="36.7" height="84.7" fill="#6f77c7" />
<text x="753.9" y="447.8" font-size="7.8" fill="#434140" text-anchor="middle" textLength="32" lengthAdjust="spacingAndGlyphs" >Pharmacy</text>
<rect x="783.3" y="356.6" width="36.7" height="81.2" fill="#6f77c7" />
<text x="801.9" y="447.8" font-size="7.8" fill="#434140" text-anchor="middle" textLength="42.5" lengthAdjust="spacingAndGlyphs" >Supermarket</text>
<rect x="831.3" y="369.8" width="36.7" height="68.0" fill="#6f77c7" />
<text x="849.9" y="447.8" font-size="7.8" fill="#434140" text-anchor="middle" textLength="18.5" lengthAdjust="spacingAndGlyphs" >Kiosk</text>
<polyline points="705.7,424.5 753.6,364.5 801.6,334.6 849.6,373.2" fill="none" stroke="#e63c44" stroke-width="1.5" stroke-linejoin="round"/>
<rect x="691.8" y="345" width="27" height="11" fill="#e3e5f5" rx="2" opacity="0.95"/>
<text x="705.3" y="353" font-size="8" fill="#454341" text-anchor="middle" textLength="18.3" lengthAdjust="spacingAndGlyphs" >13.8M</text>
<text x="753.8" y="346.5" font-size="8" fill="#454341" text-anchor="middle" textLength="18" lengthAdjust="spacingAndGlyphs" >12.2M</text>
<clipPath id="cp1"><rect x="735" y="353" width="38" height="20"/></clipPath>
<g clip-path="url(#cp1)">
<rect x="741.2" y="349.6" width="25.6" height="11" fill="#e3e5f5" rx="2" opacity="0.95"/>
<text x="754" y="357.6" font-size="8" fill="#454341" text-anchor="middle" textLength="16.5" lengthAdjust="spacingAndGlyphs" >32.57</text>
</g>
<rect x="793.5" y="329" width="18.5" height="8" fill="#ffffff" rx="1" opacity="0.75"/>
<text x="802.6" y="336" font-size="8" fill="#454341" text-anchor="middle" textLength="16.5" lengthAdjust="spacingAndGlyphs" >32.64</text>
<text x="802" y="350.4" font-size="8" fill="#454341" text-anchor="middle" textLength="17.6" lengthAdjust="spacingAndGlyphs" >11.7M</text>
<text x="849.6" y="363" font-size="8" fill="#454341" text-anchor="middle" textLength="15" lengthAdjust="spacingAndGlyphs" >9.8M</text>
<rect x="837.85" y="377" width="25.3" height="11" fill="#e3e5f5" rx="2" opacity="0.95"/>
<text x="850.5" y="385" font-size="8" fill="#454341" text-anchor="middle" textLength="16.5" lengthAdjust="spacingAndGlyphs" >32.55</text>
<rect x="693.0500000000001" y="426.4" width="25.3" height="11" fill="#e3e5f5" rx="2" opacity="0.95"/>
<text x="705.7" y="434.4" font-size="8" fill="#454341" text-anchor="middle" textLength="16.5" lengthAdjust="spacingAndGlyphs" >32.43</text>
<text x="778" y="460" font-size="8" fill="#1f1f1f" text-anchor="middle" font-weight="bold" textLength="53" lengthAdjust="spacingAndGlyphs" >CustomerType</text>
<text x="641" y="384" font-size="8" fill="#1f1f1f" text-anchor="middle" font-weight="bold" textLength="42" lengthAdjust="spacingAndGlyphs" transform="rotate(-90 641 384)" >Total Sales</text>
<text x="919.3" y="383" font-size="8" fill="#1f1f1f" text-anchor="middle" font-weight="bold" textLength="56" lengthAdjust="spacingAndGlyphs" transform="rotate(-90 919.3 383)" >Profit Margin %</text>
<rect x="45" y="468" width="955" height="15" fill="#f3f3f3" />
<line x1="45" y1="468.5" x2="1000" y2="468.5" stroke="#e6e6e6" stroke-width="1" />
<path d="M861.5 476 h3.2" fill="none" stroke="#242424" stroke-width="1.2" />
<line x1="868" y1="476" x2="933" y2="476" stroke="#8a8a8a" stroke-width="1" />
<rect x="894.3" y="472.3" width="2.6" height="6.8" fill="#333333" />
<line x1="900.5" y1="474" x2="900.5" y2="478" stroke="#6a6a6a" stroke-width="1" />
<path d="M936.7 476 h5 M939.2 473.5 v5" fill="none" stroke="#242424" stroke-width="1.2" />
<text x="950.6" y="478.6" font-size="8.5" fill="#333333" textLength="14.5" lengthAdjust="spacingAndGlyphs" >87%</text>
<rect x="978.5" y="473.5" width="9" height="6" fill="none" rx="1" stroke="#3a3a4a" stroke-width="1" />
<path d="M980.5 475.5 v0.8 M985.5 475.5 v0.8 M980.5 477.2 v0.8 M985.5 477.2 v0.8" fill="none" stroke="#3a3a4a" stroke-width="0.9" />
<path d="M1000 479 V483 H995 Q1000 483 1000 479 Z" fill="#2b2b2b" stroke="none" stroke-width="1" />
<path d="M0 479 V483 H5 Q0 483 0 479 Z" fill="#2b2b2b" stroke="none" stroke-width="1" />
<rect x="2" y="443.5" width="40.5" height="38.5" fill="#ffffff" rx="4" />
<defs><linearGradient id="pb1" x1="0" y1="0" x2="1" y2="1"><stop offset="0" stop-color="#f6d860"/><stop offset="1" stop-color="#d49a18"/></linearGradient></defs>
<circle cx="24.2" cy="458.4" r="23.2" fill="none" stroke="#cfd6d8" stroke-width="1.2" opacity="0.7"/>
<circle cx="24.2" cy="458.4" r="21.3" fill="#fbfcf7" stroke="#e2ecca" stroke-width="3" opacity="0.75"/>
<path d="M11.5 447 q12.7 -4.5 25.5 0 q0.5 15 -12.7 23.5 q-13.2 -8.5 -12.8 -23.5 z" fill="none" stroke="#cfdcc0" stroke-width="2.6" opacity="0.8"/>
<path d="M14.5 447.5 l7.5 5.5 v9 l-4.5 4 q-3.5 -8 -3 -18.5 z" fill="#c9d2da" stroke="none" stroke-width="1" opacity="0.8"/>
<rect x="17.4" y="457" width="3.4" height="8.2" fill="url(#pb1)" />
<rect x="20.6" y="452.8" width="3.6" height="12.4" fill="#dba520" />
<rect x="23.8" y="449" width="4.3" height="16.2" fill="url(#pb1)" />
<text x="22.6" y="473.5" font-size="7.5" fill="#3a3030" text-anchor="middle" textLength="25" lengthAdjust="spacingAndGlyphs" >Power BI</text>
</svg>
</body></html>
